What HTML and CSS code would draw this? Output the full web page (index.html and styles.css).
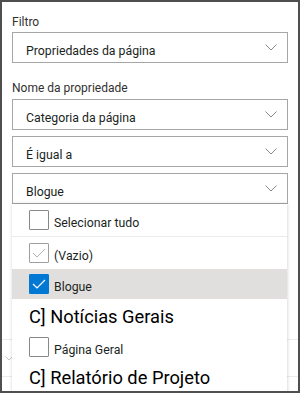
FILE: index.html
```html
<!DOCTYPE html>
<html lang="pt">
<head>
<meta charset="utf-8">
<link rel="stylesheet" href="styles.css">
</head>
<body>
<div class="frame">
  <div class="label first">Filtro</div>
  <div class="dropdown d1">
    <span class="value">Propriedades da página</span>
    <svg class="chev" width="12" height="7" viewBox="0 0 12 7"><path d="M0.5 0.5 L6 6 L11.5 0.5" fill="none" stroke="#8a8886" stroke-width="1"/></svg>
  </div>
  <div class="label second">Nome da propriedade</div>
  <div class="dropdown d2">
    <span class="value">Categoria da página</span>
    <svg class="chev" width="12" height="7" viewBox="0 0 12 7"><path d="M0.5 0.5 L6 6 L11.5 0.5" fill="none" stroke="#8a8886" stroke-width="1"/></svg>
  </div>
  <div class="dropdown d3">
    <span class="value">É igual a</span>
    <svg class="chev" width="12" height="7" viewBox="0 0 12 7"><path d="M0.5 0.5 L6 6 L11.5 0.5" fill="none" stroke="#8a8886" stroke-width="1"/></svg>
  </div>
  <div class="dropdown d3">
    <span class="value">Blogue</span>
    <svg class="chev" width="12" height="7" viewBox="0 0 12 7"><path d="M0.5 0.5 L6 6 L11.5 0.5" fill="none" stroke="#8a8886" stroke-width="1"/></svg>
  </div>
  <div class="behind">
    <div class="bg-row tall"></div>
    <div class="bg-row">
      <svg class="bg-chev" width="8" height="5" viewBox="0 0 8 5"><path d="M0.5 0.5 L4 4 L7.5 0.5" fill="none" stroke="#c8c6c4" stroke-width="1"/></svg>
    </div>
  </div>

  <div class="popup">
    <div class="opt header">
      <span class="box"></span><span class="txt">Selecionar tudo</span>
    </div>
    <div class="opt">
      <span class="box gray"><svg width="14" height="10" viewBox="0 0 14 10"><path d="M1 5 L5 9 L13 1" fill="none" stroke="#b3b0ad" stroke-width="1"/></svg></span><span class="txt">(Vazio)</span>
    </div>
    <div class="opt selected">
      <span class="box checked"><svg width="14" height="10" viewBox="0 0 14 10"><path d="M1 5 L5 9 L13 1" fill="none" stroke="#ffffff" stroke-width="1.2"/></svg></span><span class="txt">Blogue</span>
    </div>
    <div class="opt big">C] Notícias Gerais</div>
    <div class="opt small">
      <span class="box"></span><span class="txt">Página Geral</span>
    </div>
    <div class="opt big last">C] Relatório de Projeto</div>
  </div>
</div>
</body>
</html>
```
FILE: styles.css
```css
* { box-sizing: border-box; }
html, body { margin: 0; padding: 0; background: #ffffff; }
body {
  font-family: Roboto, "Noto Sans", "Liberation Sans", sans-serif;
  color: #201f1e;
}
.frame {
  position: relative;
  width: 300px;
  height: 393px;
  border: 2px solid #4f4f4f;
  padding: 12px 10px 0;
  overflow: hidden;
  background: #ffffff;
}
.label {
  font-size: 12px;
  line-height: 16px;
  height: 16px;
  color: #323130;
}
.label.second { margin-top: 17px; }
.dropdown {
  height: 31px;
  border: 1px solid #a6a6a6;
  display: flex;
  align-items: center;
  justify-content: space-between;
  padding: 0 10px 0 13px;
  font-size: 12.3px;
  color: #201f1e;
}
.dropdown .value { padding-top: 6px; }
.dropdown.d1 { margin-top: 2px; }
.dropdown.d2 { margin-top: 3px; }
.dropdown.d3 { margin-top: 6px; }
.chev { display: block; }
.behind { margin: 0 -10px; }
.bg-row {
  height: 37px;
  border-bottom: 1px solid #edebe9;
  display: flex;
  align-items: center;
  padding-left: 3px;
}
.bg-row.tall { height: 136px; }
.bg-chev { display: block; }
.popup {
  position: absolute;
  left: 10px;
  top: 202px;
  width: 275px;
  bottom: -10px;
  background: #ffffff;
  box-shadow: 0 0 4px rgba(0,0,0,0.13), 1px 0 3px rgba(0,0,0,0.06);
}
.opt {
  display: flex;
  align-items: center;
  height: 32px;
  padding-left: 17px;
  font-size: 12.3px;
  color: #201f1e;
}
.opt.header {
  height: 33px;
  border-bottom: 1px solid #edebe9;
}
.opt.selected {
  height: 30px;
  background: #e1dfdd;
}
.opt.big {
  height: 34px;
  font-size: 18.3px;
  color: #000000;
}
.opt.small { height: 28px; }
.opt.last { height: 32px; }
.box {
  width: 20px;
  height: 20px;
  border: 1px solid #8a8886;
  border-radius: 1px;
  display: flex;
  align-items: center;
  justify-content: center;
  flex: none;
  margin-right: 5px;
  background: #ffffff;
}
.box.gray { border-color: #a19f9d; }
.box.checked { background: #0078d4; border-color: #0078d4; }
.box svg { display: block; }
.txt { white-space: nowrap; padding-top: 6px; }
```
